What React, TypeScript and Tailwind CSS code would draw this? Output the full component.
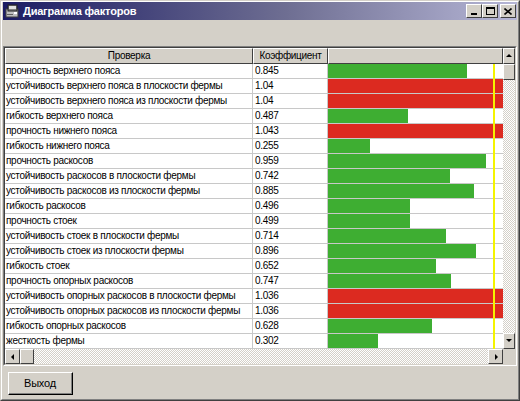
import React from "react";

const rows: [string, number][] = [
  ["прочность верхнего пояса", 0.845],
  ["устойчивость верхнего пояса в плоскости фермы", 1.04],
  ["устойчивость верхнего пояса из плоскости фермы", 1.04],
  ["гибкость верхнего пояса", 0.487],
  ["прочность нижнего пояса", 1.043],
  ["гибкость нижнего пояса", 0.255],
  ["прочность раскосов", 0.959],
  ["устойчивость раскосов в плоскости фермы", 0.742],
  ["устойчивость раскосов из плоскости фермы", 0.885],
  ["гибкость раскосов", 0.496],
  ["прочность стоек", 0.499],
  ["устойчивость стоек в плоскости фермы", 0.714],
  ["устойчивость стоек из плоскости фермы", 0.896],
  ["гибкость стоек", 0.652],
  ["прочность опорных раскосов", 0.747],
  ["устойчивость опорных раскосов в плоскости фермы", 1.036],
  ["устойчивость опорных раскосов из плоскости фермы", 1.036],
  ["гибкость опорных раскосов", 0.628],
  ["жесткость фермы", 0.302],
];

function Raised({ className = "", children }: { className?: string; children?: React.ReactNode }) {
  return (
    <div className={"border border-t-white border-l-white border-r-[#404040] border-b-[#404040] bg-[#d4d0c8] " + className}>
      {children}
    </div>
  );
}

function Arrow({ dir }: { dir: "up" | "down" | "left" | "right" }) {
  const pts: Record<string, string> = {
    up: "1,5 4,2 7,5",
    down: "1,2 4,5 7,2",
    left: "5,1 2,4 5,7",
    right: "3,1 6,4 3,7",
  };
  return (
    <svg width="8" height="8" viewBox="0 0 8 8">
      <polygon points={pts[dir]} fill="#000" />
    </svg>
  );
}

function TitleIcon() {
  return (
    <svg width="16" height="14" viewBox="0 0 16 14">
      <rect x="1" y="5" width="12" height="8" fill="#c0c0c0" stroke="#404040" strokeWidth="1" />
      <rect x="3" y="1" width="9" height="6" fill="#808080" stroke="#202020" strokeWidth="1" />
      <rect x="4" y="2" width="7" height="3" fill="#e0e0e0" />
      <rect x="9" y="8" width="3" height="2" fill="#ffffff" />
      <rect x="2" y="10" width="6" height="1" fill="#606060" />
    </svg>
  );
}

const track = "bg-[repeating-conic-gradient(#d4d0c8_0%_25%,#ffffff_0%_50%)] bg-[length:2px_2px]";

export default function App() {
  const k = 165;
  return (
    <div className="w-[520px] h-[401px] flex flex-col bg-[#d4d0c8] border border-t-[#d4d0c8] border-l-[#d4d0c8] border-r-[#404040] border-b-[#404040] font-['Liberation_Sans',sans-serif] overflow-hidden">
      <div className="flex flex-col flex-1 border border-t-white border-l-white border-r-[#808080] border-b-[#808080]">
        {/* title bar */}
        <div className="h-[18px] mx-[1px] flex items-center bg-[linear-gradient(to_right,#1c1c64,#6e6e92_55%,#b6b6d6)]">
          <div className="ml-[2px] w-[16px] h-[14px] flex items-center">
            <TitleIcon />
          </div>
          <div className="ml-[2px] text-white font-bold text-[11px] leading-none tracking-[-0.2px]">Диаграмма факторов</div>
          <div className="ml-auto mr-[1px] flex items-center">
            <Raised className="w-[16px] h-[14px] flex items-end justify-center pb-[2px]">
              <div className="w-[6px] h-[2px] bg-black" />
            </Raised>
            <Raised className="w-[16px] h-[14px] flex items-center justify-center">
              <div className="w-[9px] h-[8px] border border-black border-t-2" />
            </Raised>
            <Raised className="ml-[2px] w-[16px] h-[14px] flex items-center justify-center">
              <svg width="8" height="7" viewBox="0 0 8 7">
                <path d="M0.5 0.5 L7.5 6.5 M7.5 0.5 L0.5 6.5" stroke="#000" strokeWidth="1.6" />
              </svg>
            </Raised>
          </div>
        </div>

        {/* empty panel */}
        <div className="h-[26px]" />

        {/* grid */}
        <div className="mx-[1px] h-[320px] flex flex-col border border-t-[#808080] border-l-[#808080] border-r-white border-b-white">
          <div className="flex-1 flex flex-col border border-t-[#404040] border-l-[#404040] border-r-[#d4d0c8] border-b-[#d4d0c8] bg-white min-h-0">
            <div className="flex flex-1 min-h-0">
              <div className="flex flex-col w-[498px]">
                {/* header */}
                <div className="flex h-[16px] text-[10px] leading-none tracking-[-0.3px] text-black">
                  <Raised className="w-[248px] flex items-center justify-center">Проверка</Raised>
                  <Raised className="w-[75px] flex items-center justify-center">Коэффициент</Raised>
                  <Raised className="flex-1" />
                </div>
                {rows.map(([name, v], i) => {
                  const over = v > 1;
                  const w = Math.min(Math.round(v * k), 175);
                  return (
                    <div key={i} className="flex h-[15px] border-b border-[#c8c8c8] text-[10px] leading-none tracking-[-0.3px] text-black">
                      <div className="w-[248px] border-r border-[#c8c8c8] flex items-center pl-[1px] whitespace-nowrap overflow-hidden">{name}</div>
                      <div className="w-[75px] border-r border-[#c8c8c8] flex items-center pl-[2px]">{String(v)}</div>
                      <div className="flex-1 relative">
                        <div
                          className={over ? "h-full bg-[#dc2a20]" : "h-full bg-[#3eae32]"}
                          style={{ width: over ? "100%" : w + "px" }}
                        />
                        <div className="absolute top-0 bottom-[-1px] left-[165px] w-[2px] bg-[#f4f400]" />
                      </div>
                    </div>
                  );
                })}
              </div>
              {/* vertical scrollbar */}
              <div className={"flex-1 flex flex-col " + track}>
                <Raised className="h-[16px] flex items-center justify-center"><Arrow dir="up" /></Raised>
                <Raised className="h-[16px]" />
                <div className="flex-1" />
                <Raised className="h-[16px] flex items-center justify-center"><Arrow dir="down" /></Raised>
              </div>
            </div>
            {/* horizontal scrollbar */}
            <div className="flex h-[15px]">
              <div className={"w-[498px] flex " + track}>
                <Raised className="w-[15px] flex items-center justify-center"><Arrow dir="left" /></Raised>
                <Raised className="w-[14px]" />
                <div className="flex-1" />
                <Raised className="w-[15px] flex items-center justify-center"><Arrow dir="right" /></Raised>
              </div>
              <div className="flex-1 bg-[#d4d0c8]" />
            </div>
          </div>
        </div>

        {/* bottom */}
        <div className="flex-1 flex items-start pl-[6px] pt-[6px]">
          <div className="border border-r-black border-b-black border-t-white border-l-white">
            <div className="w-[63px] h-[21px] flex items-center justify-center text-[11px] tracking-[-0.2px] text-black bg-[#d4d0c8] border-r border-b border-[#808080]">
              Выход
            </div>
          </div>
        </div>
      </div>
    </div>
  );
}
